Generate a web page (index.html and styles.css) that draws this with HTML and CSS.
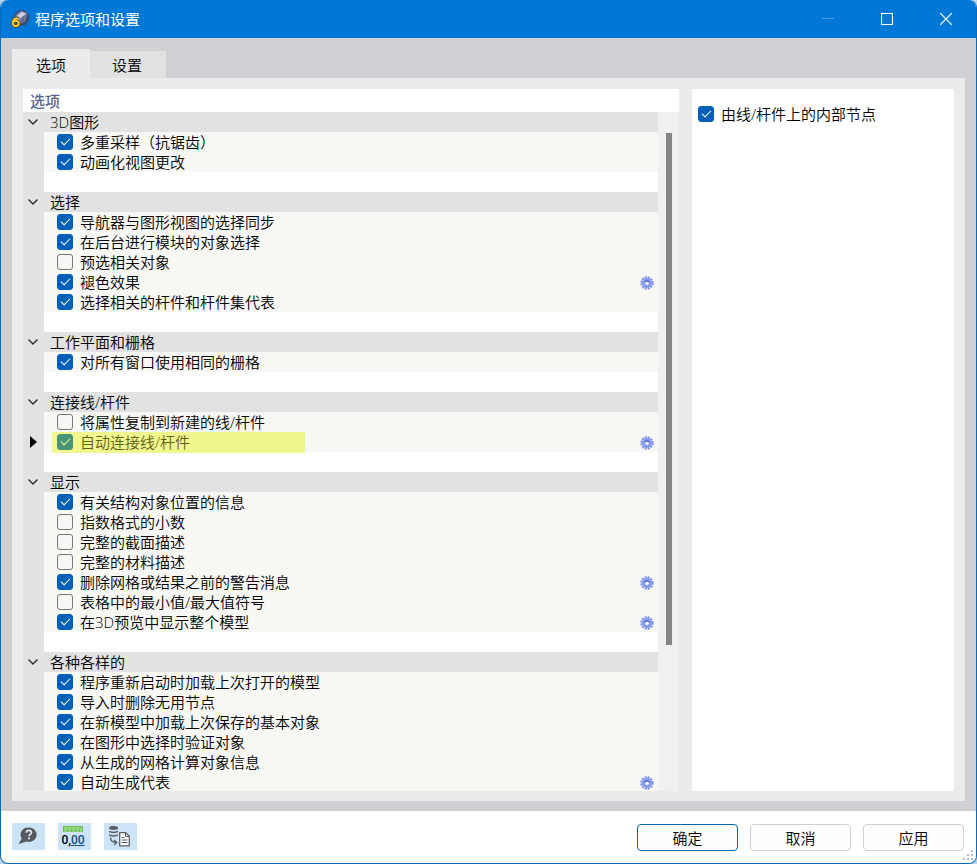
FILE: index.html
```html
<!DOCTYPE html>
<html lang="zh-CN">
<head>
    <meta charset="UTF-8">
    <meta name="viewport" content="width=device-width, initial-scale=1.0">
    <title>程序选项和设置</title>
    <link rel="stylesheet" href="styles.css">
</head>
<body>
    <svg class="sprite" width="0" height="0">
        <symbol id="chevron" viewBox="0 0 12 8">
            <path d="M1.500 1.500 6 6l4.500-4.500" fill="none" stroke="#333" stroke-width="1.500"/>
        </symbol>
        <symbol id="gear" viewBox="0 0 14 14">
            <circle cx="7" cy="7" r="5.300" fill="none" stroke="#8093e4" stroke-width="2.800" stroke-dasharray="1.900 .875"/>
            <circle cx="7" cy="7" r="3.500" fill="#fff" stroke="#839bf0" stroke-width="3"/>
            <path d="M5.200 6.300a1.900 1.900 0 0 1 3.600 0" fill="none" stroke="#2b398f" stroke-width="1.100"/>
        </symbol>
    </svg>

    <div class="window">
        <div class="titlebar">
            <svg class="app-icon" viewBox="0 0 20 20">
                <circle cx="11.500" cy="9" r="8" fill="#385078"/>
                <path d="M5 7l6-5 6 2-2 8-6 3z" fill="#8b91b5"/>
                <path d="M7 7l5-4 4 2-5 4z" fill="#d4d0e4"/>
                <path d="M11 9l5-4-2 7-4 2z" fill="#65698c"/>
                <path d="M8.500 9.700C4.500 8.500 2.800 11 2.800 14.600a3 2.700 0 1 0 .7-2" fill="none" stroke="#4f4a35" stroke-width="3.600"/>
                <path d="M8.500 9.700C4.500 8.500 2.800 11 2.800 14.600a3 2.700 0 1 0 .7-2" fill="none" stroke="#f5ca28" stroke-width="2"/>
            </svg>
            <span class="title">程序选项和设置</span>
            <div class="controls">
                <svg viewBox="0 0 12 12"><path d="M0 5.500h12" stroke="#4b9de0"/></svg>
                <svg viewBox="0 0 12 12"><path d="M.5.5h11v11H.5z" fill="none" stroke="#fff" stroke-width="1.200"/></svg>
                <svg viewBox="0 0 12 12"><path d="M0 0l12 12M12 0 0 12" stroke="#fff" stroke-width="1.200"/></svg>
            </div>
        </div>

        <div class="content">
            <div class="tabs">
                <div class="tab active">选项</div>
                <div class="tab">设置</div>
            </div>
            <div class="page">
                <div class="options">
                    <div class="options-title">选项</div>
                    <div class="options-body">
                        <div class="tree">
                            <div class="group">
                                <div class="group-name"><svg class="chevron"><use href="#chevron"/></svg>3D图形</div>
                                <div class="row"><span class="check on"></span>多重采样（抗锯齿）</div>
                                <div class="row"><span class="check on"></span>动画化视图更改</div>
                            </div>
                            <div class="group">
                                <div class="group-name"><svg class="chevron"><use href="#chevron"/></svg>选择</div>
                                <div class="row"><span class="check on"></span>导航器与图形视图的选择同步</div>
                                <div class="row"><span class="check on"></span>在后台进行模块的对象选择</div>
                                <div class="row"><span class="check"></span>预选相关对象</div>
                                <div class="row"><span class="check on"></span>褪色效果<svg class="gear"><use href="#gear"/></svg></div>
                                <div class="row"><span class="check on"></span>选择相关的杆件和杆件集代表</div>
                            </div>
                            <div class="group">
                                <div class="group-name"><svg class="chevron"><use href="#chevron"/></svg>工作平面和栅格</div>
                                <div class="row"><span class="check on"></span>对所有窗口使用相同的栅格</div>
                            </div>
                            <div class="group">
                                <div class="group-name"><svg class="chevron"><use href="#chevron"/></svg>连接线/杆件</div>
                                <div class="row"><span class="check"></span>将属性复制到新建的线/杆件</div>
                                <div class="row current"><span class="mark"><span class="check on"></span>自动连接线/杆件</span><svg class="gear"><use href="#gear"/></svg></div>
                            </div>
                            <div class="group">
                                <div class="group-name"><svg class="chevron"><use href="#chevron"/></svg>显示</div>
                                <div class="row"><span class="check on"></span>有关结构对象位置的信息</div>
                                <div class="row"><span class="check"></span>指数格式的小数</div>
                                <div class="row"><span class="check"></span>完整的截面描述</div>
                                <div class="row"><span class="check"></span>完整的材料描述</div>
                                <div class="row"><span class="check on"></span>删除网格或结果之前的警告消息<svg class="gear"><use href="#gear"/></svg></div>
                                <div class="row"><span class="check"></span>表格中的最小值/最大值符号</div>
                                <div class="row"><span class="check on"></span>在3D预览中显示整个模型<svg class="gear"><use href="#gear"/></svg></div>
                            </div>
                            <div class="group">
                                <div class="group-name"><svg class="chevron"><use href="#chevron"/></svg>各种各样的</div>
                                <div class="row"><span class="check on"></span>程序重新启动时加载上次打开的模型</div>
                                <div class="row"><span class="check on"></span>导入时删除无用节点</div>
                                <div class="row"><span class="check on"></span>在新模型中加载上次保存的基本对象</div>
                                <div class="row"><span class="check on"></span>在图形中选择时验证对象</div>
                                <div class="row"><span class="check on"></span>从生成的网格计算对象信息</div>
                                <div class="row"><span class="check on"></span>自动生成代表<svg class="gear"><use href="#gear"/></svg></div>
                            </div>
                        </div>
                        <div class="scrollbar"><div class="thumb"></div></div>
                    </div>
                </div>
                <div class="details">
                    <div class="detail"><span class="check on"></span>由线/杆件上的内部节点</div>
                </div>
            </div>
        </div>

        <div class="footer">
            <div class="tools">
                <div class="tool">
                    <svg viewBox="0 0 33 27">
                        <path d="M17 4.500a7.500 7.200 0 1 1-2.300 14L6.500 21l3.300-5.400A7.500 7.200 0 0 1 17 4.500z" fill="#55585c"/>
                        <path d="M14.300 9.700c.2-3 5.200-2.900 5.200-.2 0 2-2.500 1.800-2.500 3.800" fill="none" stroke="#dfeaf3" stroke-width="1.700"/>
                        <path d="M16 14.500h2v1.700h-2z" fill="#dfeaf3"/>
                    </svg>
                </div>
                <div class="tool units">
                    <svg viewBox="0 0 20 6">
                        <path d="M0 0h20v6H0z" fill="#91d47b"/>
                        <path d="M.5 6V.5h19V6M4.500 3v3M8.500 3v3M12.500 3v3M16.500 3v3" fill="none" stroke="#6fbd59"/>
                    </svg>
                    <span>0,<u>00</u></span>
                </div>
                <div class="tool">
                    <svg viewBox="0 0 33 27">
                        <path d="M5 4.700c0-2.200 9-2.200 9 0v.8c0 1.900-9 1.900-9 0zM5 7.500c1 1.500 8 1.500 9 0v1.600c-1 1.500-8 1.500-9 0zM5 11c1 1.500 8 1.500 9 0v1.600c-1 1.500-8 1.500-9 0z" fill="#5b6066"/>
                        <path d="M6.500 14.500c0 3.500 2 5 6 5m-2.500-2.500 2.800 2.500-2.800 2.500" fill="none" stroke="#5b6066" stroke-width="1.400"/>
                        <path d="M15.700 9.700h6l3.600 3.600v9.500h-9.600z" fill="#fff" stroke="#5b6066" stroke-width="1.300"/>
                        <path d="M21.500 9.700v3.800h3.800M17.500 14.500h3M17.500 17h6M17.500 19.500h6" fill="none" stroke="#5b6066"/>
                    </svg>
                </div>
            </div>
            <div class="buttons">
                <button class="primary">确定</button>
                <button>取消</button>
                <button>应用</button>
            </div>
            <svg class="grip" viewBox="0 0 11 11">
                <path d="M8 0h2v2H8zM4 4h2v2H4zM8 4h2v2H8zM0 8h2v2H0zM4 8h2v2H4zM8 8h2v2H8z" fill="#b5bdc6"/>
            </svg>
        </div>
    </div>
</body>
</html>
```
FILE: styles.css
```css
* {
    box-sizing: border-box;
}

body {
    margin: 0;
    background: #b9d2e6;
    color: #000;
    font: 350 15px/20px "Open Sans", "Noto Sans CJK SC", sans-serif;
    overflow: hidden;
}

.sprite {
    position: absolute;
}

.window {
    display: flex;
    flex-direction: column;
    width: 977px;
    height: 864px;
    border: 1px solid #0b6ab8;
    border-top: none;
    border-radius: 8px;
    background: #fff;
    overflow: hidden;
    position: relative;
}

.titlebar {
    display: flex;
    align-items: center;
    height: 38px;
    flex: none;
    padding: 0 24px 0 9px;
    background: #0078d7;
    color: #fff;
    font-weight: 400;
}

.app-icon {
    width: 20px;
    height: 20px;
    margin-right: 5px;
}

.controls {
    display: flex;
    gap: 47px;
    margin-left: auto;
}

.controls svg {
    width: 12px;
    height: 12px;
}

.content {
    display: flex;
    flex-direction: column;
    height: 773px;
    flex: none;
    padding: 11px 11px 10px;
    background: #d0cfd4;
}

.tabs {
    display: flex;
    align-items: flex-end;
    height: 29px;
    flex: none;
}

.tab {
    width: 76px;
    height: 27px;
    padding-right: 2px;
    background: #e1e1e1;
    line-height: 28px;
    text-align: center;
}

.tab.active {
    width: 78px;
    height: 29px;
    padding-right: 0;
    background: #ebebeb;
    line-height: 32px;
}

.page {
    display: flex;
    gap: 13px;
    flex: 1;
    min-height: 0;
    padding: 11px 11px 10px;
    background: #ebebeb;
}

.options {
    display: flex;
    flex-direction: column;
    width: 656px;
}

.options-title {
    height: 23px;
    flex: none;
    padding-left: 7px;
    background: #fff;
    color: #53638c;
    font-weight: 500;
    line-height: 24px;
}

.options-body {
    display: flex;
    flex: 1;
    min-height: 0;
}

.tree {
    width: 635px;
    overflow: hidden;
    background: #fff;
}

/* the gutter is the group's left border */
.group {
    padding-bottom: 20px;
    border-left: 21px solid #e2e2e2;
}

.group-name {
    display: flex;
    align-items: center;
    height: 20px;
    margin-left: -21px;
    padding-left: 4px;
    background: #e2e2e2;
}

.chevron {
    width: 12px;
    height: 8px;
    margin-right: 11px;
}

.row {
    display: flex;
    align-items: center;
    height: 20px;
    padding: 0 4px 0 13px;
    background: #f7f8f4;
    position: relative;
}

.check {
    display: flex;
    align-items: center;
    justify-content: center;
    width: 16px;
    height: 16px;
    flex: none;
    margin-right: 7px;
    border: 1px solid #777;
    border-radius: 3px;
    background: #f7f7f5;
}

.check.on {
    border-color: #005fb8;
    background: #005fb8;
}

.check.on::before {
    content: "";
    width: 8px;
    height: 4px;
    margin-top: -3px;
    border: solid #fff;
    border-width: 0 0 1px 1px;
    transform: rotate(-45deg);
}

.gear {
    width: 14px;
    height: 14px;
    margin: 2px 0 0 auto;
}

.row.current {
    padding-left: 8px;
}

.row.current::before {
    content: "";
    position: absolute;
    left: -14px;
    top: 4px;
    border: solid transparent;
    border-width: 6px 0 6px 7px;
    border-left-color: #000;
}

.mark {
    display: flex;
    align-items: center;
    width: 253px;
    height: 21px;
    padding-left: 5px;
    background: #f0f78f;
    color: #5f6210;
}

.mark .check.on {
    border-color: #489477;
    background: #489477;
}

.mark .check.on::before {
    border-color: #f0f78f;
}

.scrollbar {
    width: 21px;
    padding: 21px 0 0 8px;
    background: #f0f0f0;
}

.thumb {
    width: 6px;
    height: 512px;
    background: #858585;
}

.details {
    flex: 0 0 262px;
    padding: 15px 6px;
    background: #fff;
}

.detail {
    display: flex;
    align-items: center;
}

.footer {
    display: flex;
    align-items: flex-start;
    justify-content: space-between;
    flex: 1;
    padding: 12px 12px 0 11px;
}

.tools {
    display: flex;
    gap: 13px;
}

.tool {
    width: 33px;
    height: 27px;
    background: #cce4f7;
}

.tool svg {
    display: block;
}

.units {
    display: flex;
    flex-direction: column;
    align-items: center;
    padding: 3px 3px 0 0;
    font: 500 12px/17px Roboto, sans-serif;
}

.units svg {
    width: 20px;
    height: 6px;
}

.units u {
    color: #174a86;
}

.buttons {
    display: flex;
    gap: 12px;
    padding-top: 1px;
}

button {
    width: 101px;
    height: 27px;
    padding: 0;
    border: 1px solid #d0d0d0;
    border-radius: 4px;
    background: #fdfdfd;
    color: #000;
    font: inherit;
}

button.primary {
    border-color: #0067b0;
}

.grip {
    position: absolute;
    right: 2px;
    bottom: 2px;
    width: 11px;
    height: 11px;
}
```
